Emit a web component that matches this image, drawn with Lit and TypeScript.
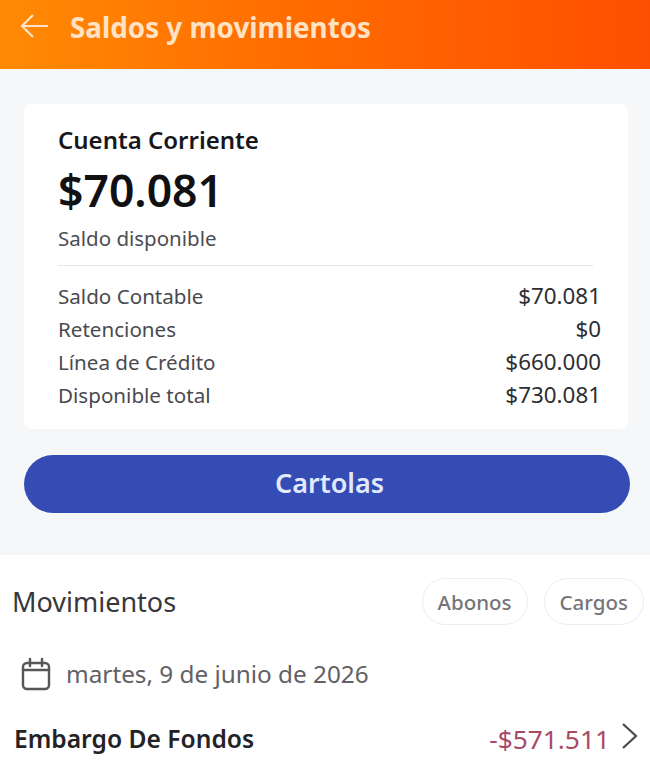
import { html, LitElement, css } from "lit";
import { customElement } from "lit/decorators.js";

const rows = [
  ["Saldo Contable", "$70.081"],
  ["Retenciones", "$0"],
  ["Línea de Crédito", "$660.000"],
  ["Disponible total", "$730.081"],
];

@customElement("app-root")
export class App extends LitElement {
  static styles = css`
    :host {
      display: block;
      height: 761px;
      overflow: hidden;
      background: #fff;
      font-family: "Noto Sans", "Open Sans", sans-serif;
      color: #1d1d22;
    }

    .topbar {
      height: 69px;
      box-sizing: border-box;
      display: flex;
      align-items: center;
      padding: 0 0 16px 19px;
      gap: 21px;
      background: linear-gradient(90deg, #ff8a05 0%, #ff6c00 45%, #ff5700 85%, #fd4f00 100%);
      color: #ffe3c4;
    }

    .topbar svg {
      width: 30px;
      height: 30px;
    }

    .topbar h1 {
      margin: 0;
      font-size: 27.8px;
      line-height: 30px;
      font-weight: 700;
    }

    .summary {
      height: 486px;
      box-sizing: border-box;
      background: #f5f7f9;
      padding: 35px 20px 0 24px;
    }

    .card {
      background: #fff;
      border-radius: 8px;
      height: 325px;
      box-sizing: border-box;
      padding: 22px 30px 0 34px;
      margin-right: 2px;
    }

    .account {
      font-size: 24px;
      line-height: 28px;
      font-weight: 600;
      color: #17171b;
    }

    .balance {
      font-size: 44.5px;
      line-height: 52px;
      font-weight: 600;
      margin-top: 10px;
      color: #111114;
    }

    .caption {
      font-size: 20.5px;
      line-height: 26px;
      color: #4d4d52;
      margin-top: 9px;
    }

    .detail {
      border-top: 1px solid #e3e4e6;
      margin: 14px 5px 0 0;
      padding-top: 17px;
      display: flex;
      flex-direction: column;
      gap: 7px;
    }

    .row {
      display: flex;
      justify-content: space-between;
      font-size: 20.6px;
      line-height: 26px;
      color: #4a4a4f;
      margin-right: -8px;
    }

    .row b {
      font-size: 22.4px;
      font-weight: 400;
      color: #2e2e33;
    }

    .primary {
      display: flex;
      align-items: center;
      justify-content: center;
      height: 58px;
      margin-top: 26px;
      padding: 0 0 4px 5px;
      box-sizing: border-box;
      border-radius: 29px;
      background: #344cb4;
      color: #e2e9fb;
      font-size: 27px;
      font-weight: 600;
    }

    .moves {
      padding: 23px 6px 0 12px;
    }

    .moves-head {
      display: flex;
      align-items: center;
      justify-content: space-between;
      height: 47px;
    }

    .moves-head h2 {
      margin: 0;
      font-size: 27px;
      font-weight: 400;
      color: #37373c;
    }

    .chips {
      display: flex;
      gap: 16px;
    }

    .chip {
      display: flex;
      align-items: center;
      height: 47px;
      box-sizing: border-box;
      padding: 0 15px;
      border: 1px solid #ececee;
      border-radius: 24px;
      font-size: 20.5px;
      font-weight: 500;
      color: #75757a;
    }

    .date {
      display: flex;
      align-items: center;
      gap: 14px;
      margin: 32px 0 0 8px;
      font-size: 24.3px;
      line-height: 32px;
      color: #616166;
    }

    .date svg {
      width: 32px;
      height: 34px;
    }

    .entry {
      display: flex;
      align-items: center;
      justify-content: space-between;
      margin-top: 31px;
      padding-left: 2px;
    }

    .entry strong {
      font-size: 24.6px;
      line-height: 34px;
      font-weight: 600;
      color: #232327;
    }

    .amount {
      display: flex;
      align-items: center;
      gap: 12px;
      margin-right: 6px;
      font-size: 26.3px;
      line-height: 34px;
      color: #a84a66;
    }

    .amount svg {
      width: 16px;
      height: 26px;
      margin-top: -6px;
    }
  `;

  render() {
    return html`
      <div class="topbar">
        <svg viewBox="0 0 30 30" fill="none" stroke="currentColor" stroke-width="2.2">
          <path d="M29 14H3M14 3L3 14l11 11" />
        </svg>
        <h1>Saldos y movimientos</h1>
      </div>

      <div class="summary">
        <div class="card">
          <div class="account">Cuenta Corriente</div>
          <div class="balance">$70.081</div>
          <div class="caption">Saldo disponible</div>
          <div class="detail">
            ${rows.map(([k, v]) => html`<div class="row"><span>${k}</span><b>${v}</b></div>`)}
          </div>
        </div>
        <div class="primary">Cartolas</div>
      </div>

      <div class="moves">
        <div class="moves-head">
          <h2>Movimientos</h2>
          <div class="chips">
            <div class="chip">Abonos</div>
            <div class="chip">Cargos</div>
          </div>
        </div>
        <div class="date">
          <svg viewBox="0 0 32 34" fill="none" stroke="#55555a" stroke-width="2.4" stroke-linecap="round">
            <rect x="3" y="6" width="26" height="26" rx="4" />
            <path d="M3 13h26M10 2v7M22 2v7" />
          </svg>
          <span>martes, 9 de junio de 2026</span>
        </div>
        <div class="entry">
          <strong>Embargo De Fondos</strong>
          <div class="amount">
            <span>-$571.511</span>
            <svg viewBox="0 0 16 26" fill="none" stroke="#4a4a4f" stroke-width="2.2">
              <path d="M1 1l13 12L1 25" />
            </svg>
          </div>
        </div>
      </div>
    `;
  }
}
